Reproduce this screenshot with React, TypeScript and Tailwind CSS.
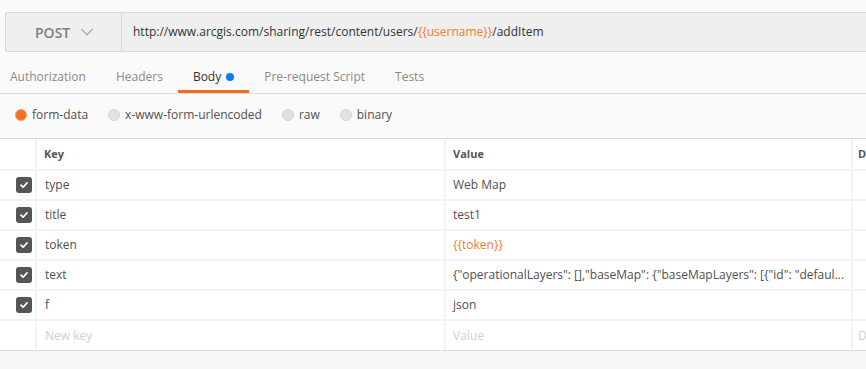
import { ChevronDown } from 'lucide-react';

const rows = [
  { key: 'type', value: 'Web Map' },
  { key: 'title', value: 'test1' },
  { key: 'token', value: '{{token}}', variable: true },
  { key: 'text', value: '{"operationalLayers": [],"baseMap": {"baseMapLayers": [{"id": "defaul...' },
  { key: 'f', value: 'json' },
];

const tabs = ['Authorization', 'Headers', 'Body', 'Pre-request Script', 'Tests'];
const bodyTypes = ['form-data', 'x-www-form-urlencoded', 'raw', 'binary'];

function Check() {
  return (
    <span className="flex h-4 w-4 items-center justify-center rounded-[3px] bg-[#555]">
      <svg width="10" height="10" viewBox="0 0 10 10" fill="none">
        <path d="M2 5.2 4.1 7.2 8 2.9" stroke="white" strokeWidth="1.7" strokeLinecap="round" strokeLinejoin="round" />
      </svg>
    </span>
  );
}

export default function App() {
  return (
    <div className="h-[369px] w-[866px] overflow-hidden bg-[#fafafa] font-['Open_Sans',sans-serif] text-[12px] text-[#505050]">
      {/* url bar */}
      <div className="pl-[5px] pt-[12px]">
        <div className="flex h-[40px] items-stretch rounded-l-[3px] border border-r-0 border-[#dadada] bg-[#efefef]">
          <div className="flex w-[116px] items-center border-r border-[#dadada] pl-[29px]">
            <span className="text-[14px] font-semibold text-[#808080]">POST</span>
            <ChevronDown size={22} strokeWidth={1.2} className="ml-[6px] text-[#a8a8a8]" />
          </div>
          <div className="flex items-center pl-[11px] text-[12px] text-[#333]">
            http://www.arcgis.com/sharing/rest/content/users/
            <span className="text-[#f47c2c]">{'{{username}}'}</span>/addItem
          </div>
        </div>
      </div>

      {/* tabs */}
      <div className="mt-[8px] flex h-[34px] border-b border-[#dedede]">
        {tabs.map((t, i) => (
          <div
            key={t}
            className={`flex items-center ${i === 0 ? 'pl-[10px] pr-[15px]' : 'px-[15px]'} ${
              t === 'Body' ? 'border-b-[3px] border-[#f26b21] pt-[3px] text-[#333]' : 'text-[#8a8a8a]'
            }`}
          >
            {t}
            {t === 'Body' && <span className="ml-[5px] h-[8px] w-[8px] rounded-full bg-[#097bed]" />}
          </div>
        ))}
      </div>

      {/* body type radios */}
      <div className="flex h-[43px] items-center pb-[2px] pl-[15px]">
        {bodyTypes.map((b, i) => (
          <div key={b} className="mr-[20px] flex items-center">
            <span
              className={`h-[12px] w-[12px] rounded-full border ${
                i === 0 ? 'border-[#f5a06a] bg-[#f47023]' : 'border-[#d4d4d4] bg-[#e2e2e2]'
              }`}
            />
            <span className="ml-[5px]">{b}</span>
          </div>
        ))}
      </div>

      {/* table */}
      <div className="mt-[1px] border-y border-[#dadada] bg-[#f3f3f3]">
        <div className="grid grid-cols-[35px_407px_405px_1fr] gap-x-[2px] gap-y-[2px]">
          <div className="h-[30px] bg-white" />
          <div className="flex h-[30px] items-center bg-white pl-[7px] text-[11px] font-bold text-[#555]">Key</div>
          <div className="flex h-[30px] items-center bg-white pl-[7px] text-[11px] font-bold text-[#555]">Value</div>
          <div className="flex h-[30px] items-center bg-white pl-[5px] text-[11px] font-bold text-[#555]">D</div>

          {rows.map((r) => (
            <div key={r.key} className="contents">
              <div className="flex h-[28px] items-center justify-end bg-white pr-[3px]">
                <Check />
              </div>
              <div className="flex h-[28px] items-center bg-white pl-[8px]">{r.key}</div>
              <div className={`flex h-[28px] items-center bg-white pl-[7px] ${r.variable ? 'text-[#f47c2c]' : ''}`}>
                {r.value}
              </div>
              <div className="h-[28px] bg-white" />
            </div>
          ))}

          <div className="h-[29px] bg-white" />
          <div className="flex h-[29px] items-center bg-white pl-[8px] text-[#cfcfcf]">New key</div>
          <div className="flex h-[29px] items-center bg-white pl-[7px] text-[#cfcfcf]">Value</div>
          <div className="flex h-[29px] items-center bg-white pl-[5px] text-[#cfcfcf]">D</div>
        </div>
      </div>
      <div className="h-[20px] bg-[#f7f7f7]" />
    </div>
  );
}
